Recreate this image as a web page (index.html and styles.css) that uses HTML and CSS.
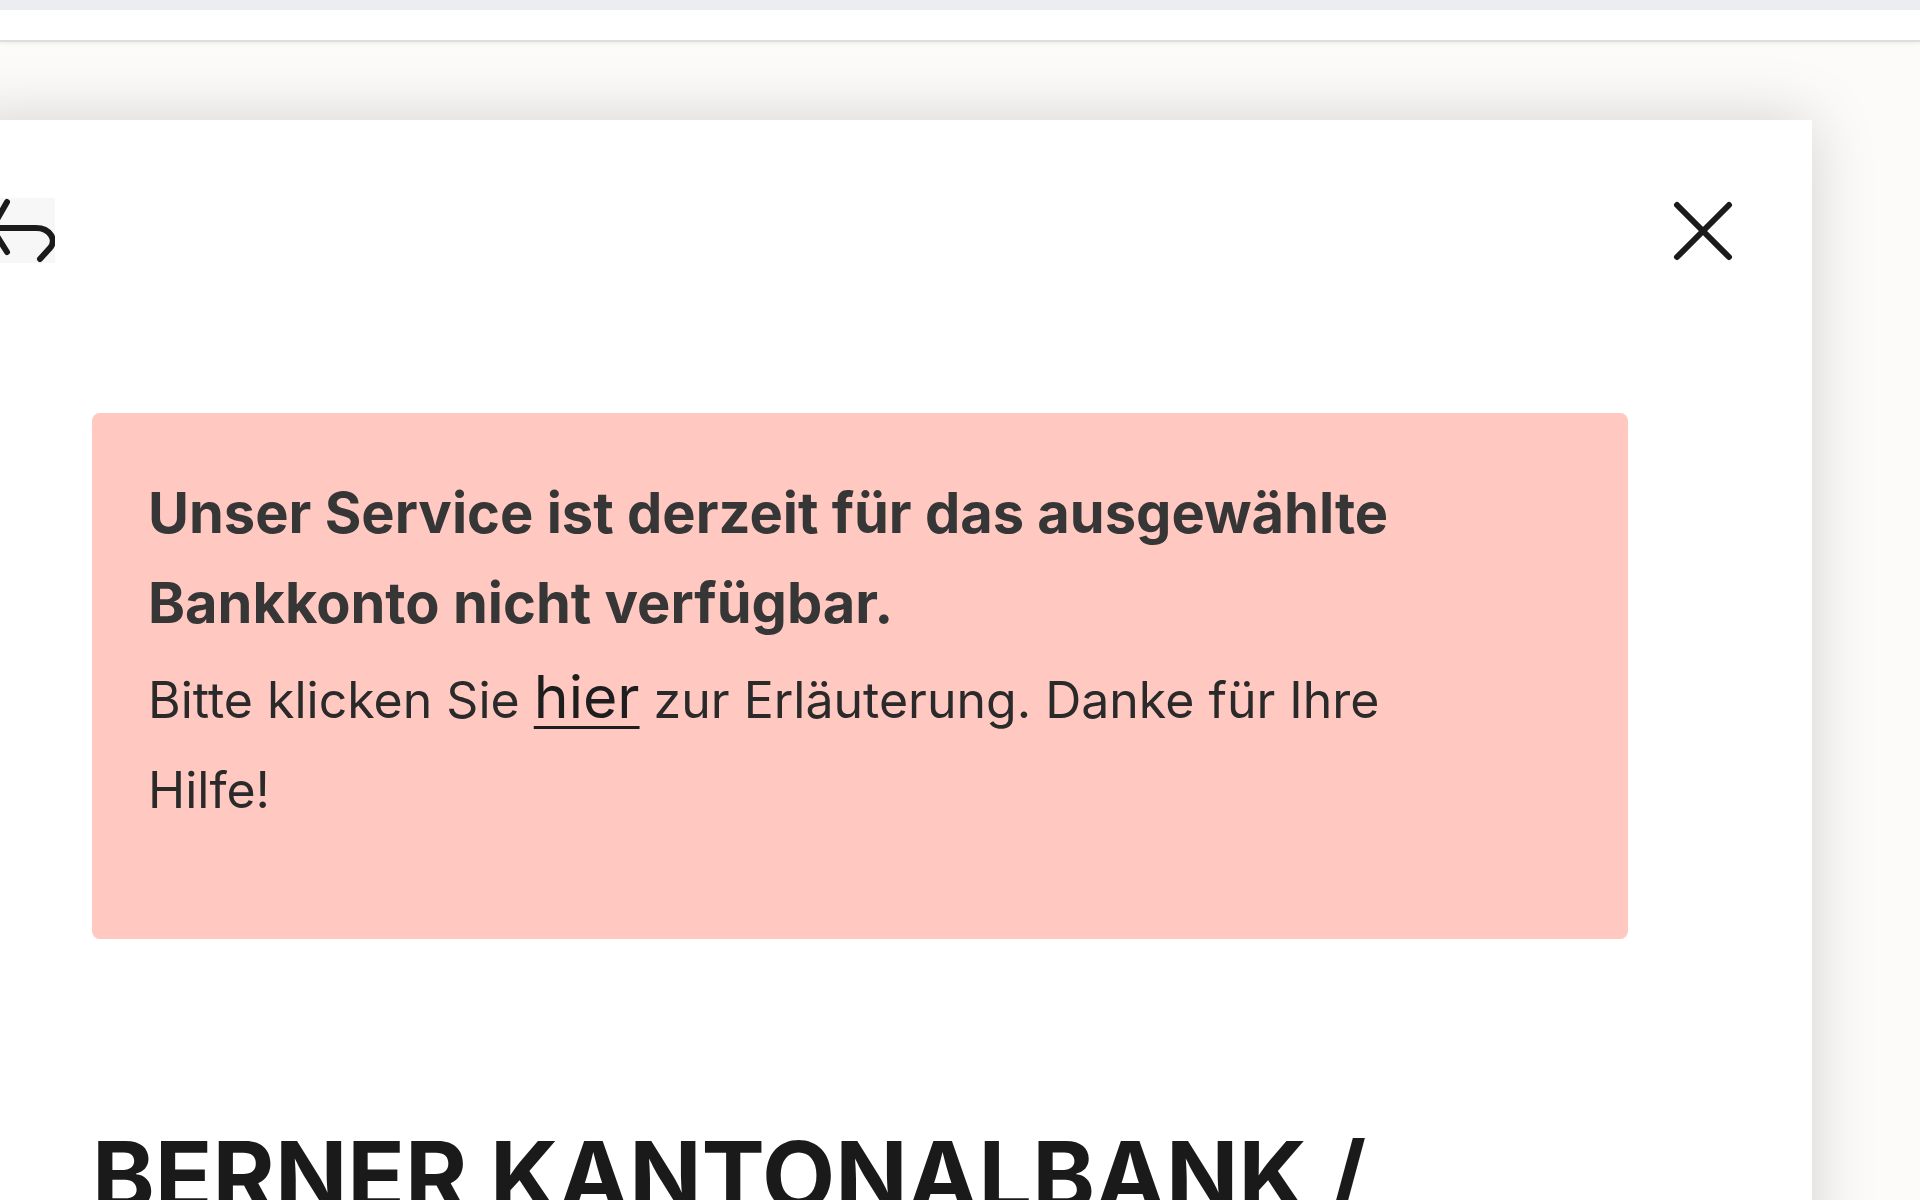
FILE: index.html
```html
<!DOCTYPE html>
<html lang="de">
<head>
<meta charset="UTF-8">
<meta name="viewport" content="width=device-width, initial-scale=1.0">
<title>Bankkonto</title>
<link rel="stylesheet" href="styles.css">
</head>
<body>
<div class="topstrip"></div>
<div class="appbar"></div>
<div class="stage">
    <div class="modal">
        <div class="modal-head">
            <button class="icon-btn back" aria-label="Zurück">
                <svg width="70" height="66" viewBox="-15 197 70 66">
                    <rect x="0" y="198" width="55" height="65" fill="#f7f7f7"/>
                    <path d="M-8 228 H36 C50 228 57 240 50 248 L40 259 M7 202 L-8 228 L7 252" fill="none" stroke="#1b1b1b" stroke-width="6" stroke-linecap="round" stroke-linejoin="round"/>
                </svg>
            </button>
            <button class="icon-btn close" aria-label="Schliessen">
                <svg width="64" height="64" viewBox="0 0 64 64">
                    <path d="M7 7 L59 59 M59 7 L7 59" fill="none" stroke="#1b1b1b" stroke-width="6" stroke-linecap="round"/>
                </svg>
            </button>
        </div>

        <div class="alert">
            <p class="alert-title">Unser Service ist derzeit für das ausgewählte Bankkonto nicht verfügbar.</p>
            <p class="alert-text">Bitte klicken Sie <a href="#">hier</a> zur Erläuterung. Danke für Ihre Hilfe!</p>
        </div>

        <h1 class="bank-name">BERNER KANTONALBANK / </h1>
    </div>
</div>
</body>
</html>
```

FILE: styles.css
```css
body {
    margin: 0;
    padding: 0;
    background-color: #fcfbf9;
    font-family: Inter, "Noto Sans", sans-serif;
    overflow: hidden;
    height: 1200px;
}
.topstrip {
    height: 10px;
    background-color: #ebedf1;
}
.appbar {
    height: 30px;
    background-color: #ffffff;
    border-bottom: 2px solid #dcdfdc;
    box-shadow: 0 2px 3px rgba(0, 0, 0, 0.05);
}
.stage {
    padding-top: 78px;
}
.modal {
    margin-left: -40px;
    width: 1852px;
    height: 1200px;
    background-color: #ffffff;
    box-shadow: 0 0 60px rgba(0, 0, 0, 0.17);
    padding: 78px 0 0 132px;
    box-sizing: border-box;
}
.modal-head {
    display: flex;
    justify-content: space-between;
    align-items: center;
    height: 64px;
    margin-left: -107px;
    margin-right: 78px;
}
.icon-btn {
    border: 0;
    padding: 0;
    background: none;
    cursor: pointer;
    display: flex;
}
.alert {
    margin-top: 151px;
    width: 1536px;
    height: 526px;
    box-sizing: border-box;
    padding: 55px 56px 0 56px;
    background-color: #ffc9c1;
    border-radius: 8px;
}
.alert p {
    margin: 0;
    max-width: 1260px;
}
.alert-title {
    font-size: 56px;
    font-weight: 700;
    line-height: 90px;
    color: #363636;
}
.alert-text {
    margin-top: 7px !important;
    font-size: 50px;
    font-weight: 400;
    line-height: 90px;
    color: #2a2a2a;
}
.alert-text a {
    font-size: 59px;
    line-height: 59px;
    color: #1e1e1e;
    text-decoration: underline;
    text-decoration-thickness: 3px;
    text-underline-offset: 8px;
}
.bank-name {
    margin: 182px 0 0 0;
    font-size: 95px;
    font-weight: 700;
    line-height: 110px;
    color: #1a1a1a;
    white-space: nowrap;
}
```
